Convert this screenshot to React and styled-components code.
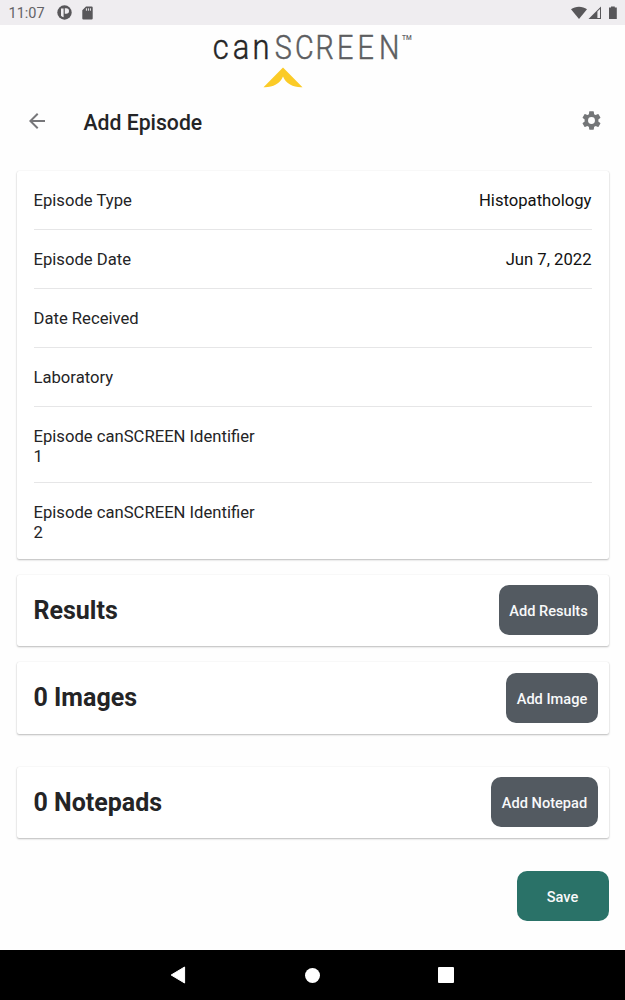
import React from 'react';
import styled, { createGlobalStyle } from 'styled-components';

const fields = [
  { label: 'Episode Type', value: 'Histopathology' },
  { label: 'Episode Date', value: 'Jun 7, 2022' },
  { label: 'Date Received' },
  { label: 'Laboratory' },
  { label: 'Episode canSCREEN Identifier 1', tall: true },
  { label: 'Episode canSCREEN Identifier 2', tall: true },
];

const App = () => {
  return (
    <Screen>
      <GlobalStyle />
      <StatusBar>
        <Clock>11:07</Clock>
        <StatusIcons>
          <svg width="15" height="15" viewBox="0 0 15 15">
            <circle cx="7.5" cy="7.5" r="7.2" fill="#58575a" />
            <path d="M4 3.4h2.6v8.8A5 5 0 0 1 4 10.8zM7.8 3.2h1.4a2.8 2.8 0 0 1 0 5.6H7.8z" fill="#efedf0" />
          </svg>
          <svg width="11" height="14" viewBox="0 0 11 14">
            <path d="M4 .5h5.6a1.1 1.1 0 0 1 1.1 1.1v10.8a1.1 1.1 0 0 1-1.1 1.1H1.4a1.1 1.1 0 0 1-1.1-1.1V4.2z" fill="#58575a" />
            <path d="M4.4 2.3v2.4M6.4 2.3v2.4M8.4 2.3v2.4" stroke="#efedf0" />
          </svg>
        </StatusIcons>
        <SignalIcons>
          <svg width="46" height="14" viewBox="0 0 46 14">
            <path d="M0 3.3C4.3-.2 11.7-.2 16 3.3L8 13z" fill="#58575a" />
            <path d="M17.5 13L30 .5V13z" fill="#58575a" />
            <path d="M26.4 5.5L29 3v9h-2.6z" fill="#efedf0" />
            <path d="M38 1.6h2V.4h3.8v1.2h2V13H38z" fill="#58575a" />
          </svg>
        </SignalIcons>
      </StatusBar>

      <Brand>
        <svg width="225" height="65" viewBox="0 0 225 65">
          <g transform="scale(.87 1)">
            <LogoText x="14.6 37.6 60.4" y="34.2" $size={35.5} $color="#252525">can</LogoText>
            <LogoText x="85.8 109.2 132.8 157.5 180.9 205.7" y="34.2" $size={33} $color="#5c5d60">SCREEN</LogoText>
          </g>
          <TradeMark x="202" y="15">TM</TradeMark>
          <path d="M83 42.5L102.5 62.2C94 62.7 86 59 83 51.5C80 59 72 62.7 63.5 62.2z" fill="#fbcb27" />
        </svg>
      </Brand>

      <Header>
        <BackIcon viewBox="0 0 24 24">
          <path d="M20 11H7.83l5.59-5.59L12 4l-8 8 8 8 1.41-1.41L7.83 13H20z" />
        </BackIcon>
        <Title>Add Episode</Title>
        <GearIcon viewBox="0 0 24 24">
          <path d="M19.14 12.94c.04-.3.06-.61.06-.94 0-.32-.02-.64-.07-.94l2.03-1.58a.49.49 0 0 0 .12-.61l-1.92-3.32a.488.488 0 0 0-.59-.22l-2.39.96c-.5-.38-1.03-.7-1.62-.94l-.36-2.54a.484.484 0 0 0-.48-.41h-3.84c-.24 0-.43.17-.47.41l-.36 2.54c-.59.24-1.13.57-1.62.94l-2.39-.96a.488.488 0 0 0-.59.22L2.74 8.87c-.12.21-.08.47.12.61l2.03 1.58c-.05.3-.09.63-.09.94s.02.64.07.94l-2.03 1.58a.49.49 0 0 0-.12.61l1.92 3.32c.12.22.37.29.59.22l2.39-.96c.5.38 1.03.7 1.62.94l.36 2.54c.05.24.24.41.48.41h3.84c.24 0 .44-.17.47-.41l.36-2.54c.59-.24 1.13-.56 1.62-.94l2.39.96c.22.08.47 0 .59-.22l1.92-3.32a.49.49 0 0 0-.12-.61zM12 15.6A3.6 3.6 0 1 1 12 8.4a3.6 3.6 0 0 1 0 7.2z" />
        </GearIcon>
      </Header>

      <Content>
        <DetailsCard>
          {fields.map((field) => (
            <Field key={field.label} $tall={field.tall}>
              <Label>{field.label}</Label>
              <Value>{field.value}</Value>
            </Field>
          ))}
        </DetailsCard>
        <SectionCard $gap={15.5}>
          <SectionTitle>Results</SectionTitle>
          <Button $width={99}>Add Results</Button>
        </SectionCard>
        <SectionCard $gap={16}>
          <SectionTitle>0 Images</SectionTitle>
          <Button $width={92}>Add Image</Button>
        </SectionCard>
        <SectionCard $gap={33}>
          <SectionTitle>0 Notepads</SectionTitle>
          <Button $width={107}>Add Notepad</Button>
        </SectionCard>
        <Actions>
          <Button $width={92} $primary>Save</Button>
        </Actions>
      </Content>

      <NavBar>
        <svg width="16" height="18" viewBox="0 0 16 18">
          <path d="M14.6 1v16L1.2 9z" fill="#fff" stroke="#fff" strokeLinejoin="round" />
        </svg>
        <HomeDot />
        <RecentSquare />
      </NavBar>
    </Screen>
  );
};

export default App;

// Styled Components
const GlobalStyle = createGlobalStyle`
  * {
    box-sizing: border-box;
  }
  body {
    margin: 0;
    background: #fefefe;
  }
  svg {
    display: block;
    flex-shrink: 0;
  }
`;

const Screen = styled.div`
  display: flex;
  flex-direction: column;
  width: 625px;
  height: 1000px;
  overflow: hidden;
  background: #fefefe;
  color: #242426;
  font-family: Roboto, 'Liberation Sans', sans-serif;
`;

const StatusBar = styled.div`
  display: flex;
  align-items: center;
  height: 25px;
  flex-shrink: 0;
  padding: 0 8px 0 8.5px;
  background: #efedf0;
  color: #636265;
`;

const Clock = styled.span`
  width: 48px;
  font-size: 14.5px;
  line-height: 25px;
  padding-top: 1px;
`;

const StatusIcons = styled.div`
  display: flex;
  align-items: center;
  gap: 10px;
`;

const SignalIcons = styled.div`
  margin-left: auto;
`;

const Brand = styled.div`
  height: 70px;
  flex-shrink: 0;
  padding-left: 200px;
`;

const LogoText = styled.text`
  font-family: Roboto, sans-serif;
  font-weight: 300;
  font-size: ${({ $size }) => $size}px;
  fill: ${({ $color }) => $color};
  stroke: ${({ $color }) => $color};
  stroke-width: 0.5px;
`;

const TradeMark = styled.text`
  font-size: 6.5px;
  font-weight: 500;
  fill: #626366;
`;

const Header = styled.header`
  display: flex;
  align-items: center;
  height: 51px;
  flex-shrink: 0;
  padding: 0 22px 0 25px;
`;

const BackIcon = styled.svg`
  width: 24px;
  height: 24px;
  fill: #77777a;
`;

const Title = styled.h1`
  flex: 1;
  margin: 4px 0 0 34.5px;
  font-size: 21.2px;
  line-height: 26px;
  font-weight: 500;
`;

const GearIcon = styled.svg`
  width: 23px;
  height: 23px;
  fill: #747678;
`;

const Content = styled.main`
  flex: 1;
  padding: 25px 16.5px 0;
`;

const Card = styled.section`
  background: #fff;
  border-radius: 2px;
  box-shadow: 0 1px 2px rgba(0, 0, 0, 0.26), 0 0 1px rgba(0, 0, 0, 0.12);
`;

const DetailsCard = styled(Card)`
  height: 388px;
  padding: 0 17px;
`;

const Field = styled.div`
  display: flex;
  justify-content: space-between;
  height: ${({ $tall }) => ($tall ? '76px' : '59px')};
  padding-top: 19.5px;
  font-size: 16.65px;
  line-height: 20px;
  border-bottom: 1px solid #e6e6e7;

  &:last-child {
    border-bottom: none;
  }
`;

const Label = styled.span`
  width: 228px;
`;

const Value = styled.span`
  color: #111;
`;

const SectionCard = styled(Card)`
  display: flex;
  align-items: center;
  justify-content: space-between;
  height: 71.5px;
  margin-top: ${({ $gap }) => $gap}px;
  padding: 0 10.5px 0 17px;
`;

const SectionTitle = styled.h2`
  margin: 0;
  padding-top: 1px;
  font-size: 25px;
  line-height: 30px;
  font-weight: 700;
`;

const Button = styled.button`
  width: ${({ $width }) => $width}px;
  height: 50px;
  padding: 2px 0 0;
  border: none;
  border-radius: 10px;
  background: ${({ $primary }) => ($primary ? '#2a7268' : '#535a61')};
  color: #f8f9fa;
  font-family: inherit;
  font-size: 14.6px;
  font-weight: 500;
  white-space: nowrap;
`;

const Actions = styled.div`
  display: flex;
  justify-content: flex-end;
  margin-top: 33px;
`;

const NavBar = styled.nav`
  display: flex;
  align-items: center;
  justify-content: space-between;
  height: 50px;
  flex-shrink: 0;
  padding: 0 171px 0 170px;
  background: #000;
`;

const HomeDot = styled.div`
  width: 15px;
  height: 15px;
  border-radius: 50%;
  background: #fff;
`;

const RecentSquare = styled.div`
  width: 16px;
  height: 16px;
  border-radius: 1px;
  background: #fff;
`;
